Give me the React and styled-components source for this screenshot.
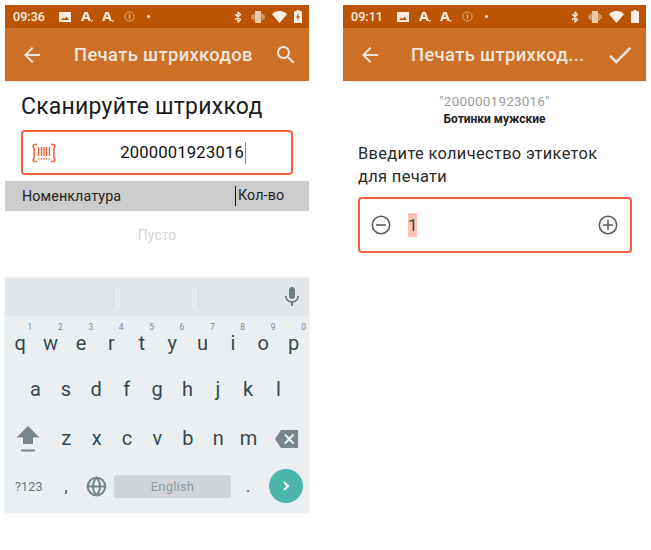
import React from "react";
import styled, { createGlobalStyle } from "styled-components";
import { Globe, Bluetooth } from "lucide-react";

const GlobalStyle = createGlobalStyle`
  * { box-sizing: border-box; }
  html, body { margin: 0; background: #fff; }
  body { font-family: Roboto, "Noto Sans", sans-serif; width: 651px; height: 550px; overflow: hidden; }
`;

const Page = styled.div`
  display: flex;
  gap: 34px;
  padding: 5px 0 0 5px;
`;

const Phone = styled.div`
  width: ${(p) => p.$width}px;
  height: 508px;
  display: flex;
  flex-direction: column;
`;

const StatusBar = styled.div`
  height: 23px;
  background: #bb5504;
  color: #f3e4d6;
  display: flex;
  align-items: center;
  padding: 0 7px 0 8px;
  font-size: 12.6px;
  font-weight: 500;
`;

const StatusTime = styled.span`
  width: 39px;
  margin-right: 7px;
  color: #fbeee2;
`;

const StatusIcons = styled.div`
  display: flex;
  align-items: center;
  gap: 9.5px;
  flex: 1;
`;

const StatusRight = styled.div`
  display: flex;
  align-items: center;
  gap: 7px;
`;

const AppBar = styled.div`
  height: 53px;
  background: #cc7028;
  color: #f0e6dc;
  display: flex;
  align-items: center;
  padding: 0 ${(p) => p.$right}px 0 15px;
  box-shadow: 0 1px 3px rgba(0, 0, 0, 0.12);
`;

const AppTitle = styled.div`
  flex: 1;
  font-size: 18.4px;
  font-weight: 500;
  letter-spacing: 0.35px;
  white-space: nowrap;
  padding-left: ${(p) => p.$pad}px;
`;

const Heading = styled.h1`
  margin: 13px 0 0 16px;
  font-size: 23px;
  line-height: 26px;
  font-weight: 400;
  color: #1c1c1c;
  letter-spacing: 0.23px;
`;

const ScanField = styled.div`
  margin: 10px 16px 0;
  height: 45px;
  border: 2px solid #f4623a;
  border-radius: 4px;
  display: flex;
  align-items: center;
  padding: 0 45px 0 9px;
  color: #f4623a;
`;

const ScanValue = styled.div`
  flex: 1;
  color: #111;
  font-size: 16.6px;
  letter-spacing: 0.2px;
  display: flex;
  justify-content: flex-end;
  align-items: center;
`;

const Caret = styled.span`
  width: 1px;
  height: 22px;
  background: #f4623a;
  margin-left: 1px;
`;

const TableHead = styled.div`
  margin-top: 6px;
  height: 30px;
  background: #cccccc;
  display: flex;
  align-items: center;
  color: #222;
  font-size: 14.3px;
  letter-spacing: 0.1px;
`;

const NameCol = styled.div`
  width: 230px;
  padding-left: 17px;
`;

const QtyCol = styled.div`
  flex: 1;
  border-left: 1px solid #111;
  padding-left: 2px;
  height: 20px;
  line-height: 19px;
`;

const Empty = styled.div`
  height: 67px;
  padding-top: 15px;
  text-align: center;
  line-height: 18px;
  font-size: 14px;
  color: #d4d4d4;
`;

const Keyboard = styled.div`
  flex: 1;
  background: #eceff1;
  display: flex;
  flex-direction: column;
  box-shadow: 0 -1px 3px rgba(0, 0, 0, 0.08);
`;

const Suggestions = styled.div`
  height: 38px;
  background: #e4e7ea;
  display: grid;
  grid-template-columns: 109px 85px 1fr;
  align-items: center;
  flex: none;
`;

const SuggestionSlot = styled.div`
  height: 23px;
  border-right: ${(p) => (p.$last ? "none" : "1px solid #d3d7da")};
  display: flex;
  justify-content: flex-end;
  align-items: center;
  padding-right: ${(p) => (p.$last ? "5px" : "0")};
`;

const KeyRow = styled.div`
  height: 49px;
  display: flex;
  justify-content: ${(p) => p.$justify || "center"};
  flex: none;
`;

const Key = styled.div`
  width: ${(p) => p.$width || 30.4}px;
  position: relative;
  display: flex;
  justify-content: center;
  align-items: center;
  padding-top: ${(p) => p.$top ?? 4}px;
  padding-bottom: ${(p) => p.$bottom ?? 0}px;
  font-size: 20px;
  color: #37474f;
  flex: none;
`;

const Hint = styled.span`
  position: absolute;
  top: 6px;
  right: 3px;
  font-size: 8.5px;
  color: #7d8a90;
`;

const BottomRow = styled.div`
  height: 46px;
  display: flex;
  align-items: center;
  flex: none;
`;

const SymbolsKey = styled.div`
  width: 42px;
  padding-left: 10px;
  font-size: 12.5px;
  letter-spacing: 0.2px;
  color: #66757c;
`;

const PunctKey = styled.div`
  width: ${(p) => p.$width}px;
  display: flex;
  justify-content: center;
  font-size: 16px;
  color: #37474f;
`;

const SpaceBar = styled.div`
  width: 117px;
  height: 23px;
  margin-left: 7px;
  border-radius: 3px;
  background: #d1d5d8;
  color: #8f9a9f;
  font-size: 13px;
  display: flex;
  align-items: center;
  justify-content: center;
  letter-spacing: 0.2px;
`;

const GoButton = styled.div`
  width: 34px;
  height: 34px;
  border-radius: 50%;
  background: #4db6ac;
  margin-left: 4px;
  display: flex;
  align-items: center;
  justify-content: center;
`;

const CodeLabel = styled.div`
  margin-top: 12px;
  text-align: center;
  font-size: 13.5px;
  line-height: 16px;
  letter-spacing: 0.2px;
  color: #9c9c9c;
`;

const ProductName = styled.div`
  margin-top: 2px;
  text-align: center;
  font-size: 12px;
  line-height: 16px;
  font-weight: 700;
  color: #222;
`;

const Prompt = styled.div`
  margin: 15px 0 0 15px;
  font-size: 16.4px;
  line-height: 23px;
  letter-spacing: 0.35px;
  color: #2a2a2a;
`;

const QtyField = styled.div`
  margin: 9px 14px 0 15px;
  height: 56px;
  border: 2px solid #f4623a;
  border-radius: 4px;
  display: flex;
  align-items: center;
  padding: 0 12px 0 11px;
`;

const QtyValue = styled.div`
  flex: 1;
  padding-left: 17px;
  display: flex;
`;

const Selected = styled.span`
  width: 9px;
  height: 24px;
  line-height: 24px;
  text-align: center;
  font-size: 17px;
  background: #fcc4b8;
  color: #444;
`;

const Dot = styled.span`
  width: 3px;
  height: 3px;
  border-radius: 50%;
  background: #f8ece0;
  margin-left: 3px;
`;

const PictureIcon = () => (
  <svg width="12" height="12" viewBox="0 0 12 12">
    <path fill="#f8ece0" fillRule="evenodd" d="M0 1h12v10H0zM2 9h8L7.5 5.5 5.5 8 4.2 6.8z" />
  </svg>
);

const FontIcon = () => (
  <svg width="12" height="12" viewBox="0 0 12 12" fill="#f8ece0">
    <path fillRule="evenodd" d="M3.4 1h3.2L10 10H7.6l-.7-2H3.1l-.7 2H0zM3.8 6h2.4L5 2.7z" />
    <path d="M10 10.2l1.6-1.6.4.4L10.6 11H10z" />
  </svg>
);

const InfoIcon = () => (
  <svg width="11" height="11" viewBox="0 0 11 11" fill="none" stroke="#e6b184" strokeWidth="1">
    <circle cx="5.5" cy="5.5" r="4.6" />
    <path d="M5.5 3v5" strokeWidth="1.4" />
  </svg>
);

const VibrateIcon = () => (
  <svg width="14" height="12" viewBox="0 0 14 12" fill="#ecc9a8">
    <path d="M4 0h6v12H4zM2.4 2.5h1v7h-1zM10.6 2.5h1v7h-1zM.6 4h1v4h-1zM12.4 4h1v4h-1z" />
  </svg>
);

const WifiSolid = () => (
  <svg width="15" height="12" viewBox="0 0 15 12" fill="#fbf1e7">
    <path d="M7.5 12L0 3.2C2 1.2 4.6 0 7.5 0s5.5 1.2 7.5 3.2z" />
  </svg>
);

const BatteryIcon = ({ charging }) => (
  <svg width="8" height="13" viewBox="0 0 8 13">
    <path fill="#fbf1e7" d="M2.5 0h3v1.3H8V13H0V1.3h2.5z" />
    {charging && <path fill="#bb5504" d="M4.5 3L2 7.5h1.7L3.2 11 6 6.3H4.2z" />}
  </svg>
);

const MaterialIcon = ({ size = 24, color = "currentColor", d }) => (
  <svg width={size} height={size} viewBox="0 0 24 24" fill={color}>
    <path d={d} />
  </svg>
);

const ARROW_BACK = "M20 11H7.83l5.59-5.59L12 4l-8 8 8 8 1.41-1.41L7.83 13H20v-2z";
const SEARCH =
  "M15.5 14h-.79l-.28-.27C15.41 12.59 16 11.11 16 9.5 16 5.91 13.09 3 9.5 3S3 5.91 3 9.5 5.91 16 9.5 16c1.61 0 3.09-.59 4.23-1.57l.27.28v.79l5 4.99L20.49 19l-4.99-5zm-6 0C7.01 14 5 11.99 5 9.5S7.01 5 9.5 5 14 7.01 14 9.5 11.99 14 9.5 14z";
const DONE = "M9 16.17L4.83 12l-1.42 1.41L9 19 21 7l-1.41-1.41z";
const MIC =
  "M12 14c1.66 0 2.99-1.34 2.99-3L15 5c0-1.66-1.34-3-3-3S9 3.34 9 5v6c0 1.66 1.34 3 3 3zm5.3-3c0 3-2.54 5.1-5.3 5.1S6.7 14 6.7 11H5c0 3.41 2.72 6.23 6 6.72V21h2v-3.28c3.28-.48 6-3.3 6-6.72h-1.7z";

const BarcodeIcon = () => (
  <svg width="24" height="20" viewBox="0 0 24 20" fill="none" stroke="#f4623a" strokeWidth="1.5">
    <path d="M5 1.5H2L1 3l1.2 3v8L1 17l1 1.5h3M19 1.5h3L23 3l-1.2 3v8L23 17l-1 1.5h-3" />
    <path d="M6.5 4v9M9.5 4v9M12 4v9M14.5 4v9M17.5 4v9" strokeWidth="1.4" />
    <path d="M6.5 15v1.5M9.5 15v1.5M12 15v1.5M14.5 15v1.5M17.5 15v1.5" strokeWidth="1.4" />
  </svg>
);

const RoundIcon = ({ plus }) => (
  <svg width="20" height="20" viewBox="0 0 20 20" fill="none" stroke="#5c5c5c" strokeWidth="1.6">
    <circle cx="10" cy="10" r="8.7" />
    <path d={plus ? "M5 10h10M10 5v10" : "M5 10h10"} />
  </svg>
);

const ShiftIcon = () => (
  <svg width="24" height="28" viewBox="0 0 24 28" fill="#78868c">
    <path d="M12 1l11.5 11.5H17V19H7v-6.5H.5z" />
    <path d="M5 24.5h14v2H5z" />
  </svg>
);

const BackspaceIcon = () => (
  <svg width="23" height="18" viewBox="0 0 23 18">
    <path fill="#78868c" d="M6 0h17v18H6L0 9z" />
    <path stroke="#eceff1" strokeWidth="2" d="M10 4.5l8.5 9M18.5 4.5l-8.5 9" />
  </svg>
);

const GoChevron = () => (
  <svg width="12" height="12" viewBox="0 0 12 12" fill="none" stroke="#fff" strokeWidth="2">
    <path d="M4 2l4 4-4 4" />
  </svg>
);

const StatusLine = ({ time, charging }) => (
  <StatusBar>
    <StatusTime>{time}</StatusTime>
    <StatusIcons>
      <PictureIcon />
      <FontIcon />
      <FontIcon />
      <InfoIcon />
      <Dot />
    </StatusIcons>
    <StatusRight>
      <Bluetooth size={12} strokeWidth={2.5} color="#fbf1e7" />
      <VibrateIcon />
      <WifiSolid />
      <BatteryIcon charging={charging} />
    </StatusRight>
  </StatusBar>
);

const rowOne = ["q", "w", "e", "r", "t", "y", "u", "i", "o", "p"];
const rowTwo = ["a", "s", "d", "f", "g", "h", "j", "k", "l"];
const rowThree = ["z", "x", "c", "v", "b", "n", "m"];

function VirtualKeyboard() {
  return (
    <Keyboard>
      <Suggestions>
        <SuggestionSlot />
        <SuggestionSlot />
        <SuggestionSlot $last>
          <MaterialIcon d={MIC} color="#6f7c82" />
        </SuggestionSlot>
      </Suggestions>
      <KeyRow $justify="flex-start">
        {rowOne.map((k, i) => (
          <Key key={k}>
            <Hint>{(i + 1) % 10}</Hint>
            {k}
          </Key>
        ))}
      </KeyRow>
      <KeyRow>
        {rowTwo.map((k) => (
          <Key key={k} $top={0} $bottom={1}>{k}</Key>
        ))}
      </KeyRow>
      <KeyRow $justify="flex-start">
        <Key $width={46} $top={0}>
          <ShiftIcon />
        </Key>
        {rowThree.map((k) => (
          <Key key={k} $top={0} $bottom={1}>{k}</Key>
        ))}
        <Key $width={45} $top={0}>
          <BackspaceIcon />
        </Key>
      </KeyRow>
      <BottomRow>
        <SymbolsKey>?123</SymbolsKey>
        <PunctKey $width={38}>,</PunctKey>
        <PunctKey $width={22}>
          <Globe size={21} color="#78868c" strokeWidth={2.4} />
        </PunctKey>
        <SpaceBar>English</SpaceBar>
        <PunctKey $width={34}>.</PunctKey>
        <GoButton>
          <GoChevron />
        </GoButton>
      </BottomRow>
    </Keyboard>
  );
}

export default function App() {
  return (
    <>
      <GlobalStyle />
      <Page>
        <Phone $width={304}>
          <StatusLine time="09:36" charging />
          <AppBar $right={11}>
            <MaterialIcon d={ARROW_BACK} />
            <AppTitle $pad={30}>Печать штрихкодов</AppTitle>
            <MaterialIcon d={SEARCH} />
          </AppBar>
          <Heading>Сканируйте штрихкод</Heading>
          <ScanField>
            <BarcodeIcon />
            <ScanValue>
              2000001923016
              <Caret />
            </ScanValue>
          </ScanField>
          <TableHead>
            <NameCol>Номенклатура</NameCol>
            <QtyCol>Кол-во</QtyCol>
          </TableHead>
          <Empty>Пусто</Empty>
          <VirtualKeyboard />
        </Phone>
        <Phone $width={303}>
          <StatusLine time="09:11" />
          <AppBar $right={11}>
            <MaterialIcon d={ARROW_BACK} />
            <AppTitle $pad={29}>Печать штрихкод...</AppTitle>
            <MaterialIcon d={DONE} size={30} />
          </AppBar>
          <CodeLabel>"2000001923016"</CodeLabel>
          <ProductName>Ботинки мужские</ProductName>
          <Prompt>
            Введите количество этикеток
            <br />
            для печати
          </Prompt>
          <QtyField>
            <RoundIcon />
            <QtyValue>
              <Selected>1</Selected>
            </QtyValue>
            <RoundIcon plus />
          </QtyField>
        </Phone>
      </Page>
    </>
  );
}
